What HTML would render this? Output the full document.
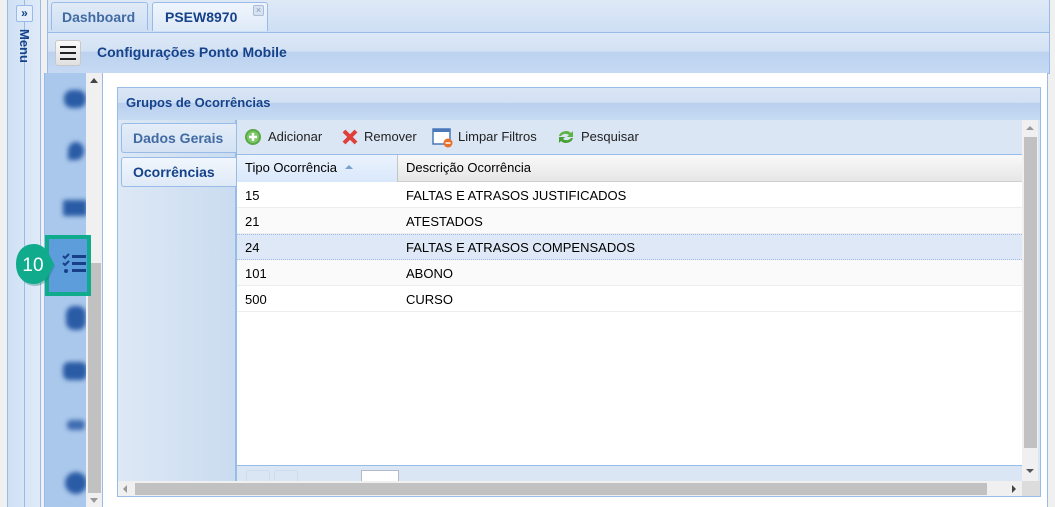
<!DOCTYPE html>
<html><head><meta charset="utf-8"><style>
*{margin:0;padding:0;box-sizing:border-box}
body{width:1055px;height:507px;overflow:hidden;background:#f0f0f0;font-family:"Liberation Sans",sans-serif;position:relative}
.a{position:absolute}
.b{font-weight:bold;color:#15428b}
.row{position:absolute;left:237px;width:785px;height:26px;border-bottom:1px solid #ededed;font-size:13px;color:#000}
.row span{position:absolute;top:6px}
.blur{filter:blur(2.5px);background:#2a5ba5;position:absolute}
</style></head><body>
<div class="a" style="left:7px;top:0;width:34px;height:507px;background:linear-gradient(90deg,#cfe0f5,#dfeaf8);border-left:1px solid #99bbe8;border-right:1px solid #99bbe8"></div>
<div class="a" style="left:24px;top:0;width:1px;height:507px;background:#99bbe8"></div>
<div class="a" style="left:16px;top:5px;width:17px;height:17px;background:#e6eef9;border:1px solid #99bbe8;border-radius:2px;font-size:12px;color:#15428b;text-align:center;line-height:14px;font-weight:bold">»</div>
<div class="a b" style="left:17px;top:29px;font-size:13px;writing-mode:vertical-rl">Menu</div>
<div class="a" style="left:47px;top:0;width:1003px;height:32px;background:linear-gradient(#dfe9f6,#cddff4);border-left:1px solid #99bbe8;border-right:1px solid #99bbe8"></div>
<div class="a b" style="left:51px;top:2px;width:97px;height:28px;background:linear-gradient(#e1ebf7,#cedff4);border:1px solid #99bbe8;border-bottom:none;border-radius:3px 3px 0 0;font-size:14px;color:#416aa3;padding:6px 0 0 10px">Dashboard</div>
<div class="a b" style="left:152px;top:2px;width:116px;height:29px;background:linear-gradient(#f0f5fc,#deeaf8);border:1px solid #99bbe8;border-bottom:none;border-radius:3px 3px 0 0;font-size:14px;color:#15428b;padding:6px 0 0 12px">PSEW8970</div>
<div class="a" style="left:253px;top:5px;width:11px;height:11px;background:#d6e2f1;border:1px solid #aabcd6;border-radius:2px;color:#8899b3;font-size:9px;line-height:9px;text-align:center">×</div>
<div class="a" style="left:47px;top:32px;width:1003px;height:42px;background:linear-gradient(#dde8f6 0,#d3e2f4 45%,#bcd2ef 48%,#c5d9f3 100%);border:1px solid #99bbe8"></div>
<div class="a" style="left:55px;top:40px;width:26px;height:26px;background:linear-gradient(#fafafa,#e0e0e0);border:1px solid #c8c8c8;border-radius:3px"></div>
<div class="a" style="left:60px;top:46px;width:16px;height:2px;background:#222;box-shadow:0 6px 0 #222,0 12px 0 #222"></div>
<div class="a b" style="left:97px;top:44px;font-size:14px">Configurações Ponto Mobile</div>
<div class="a" style="left:44px;top:73px;width:1px;height:434px;background:#99bbe8"></div>
<div class="a" style="left:45px;top:73px;width:42px;height:434px;background:#aac8ec"></div>
<div class="blur" style="left:64px;top:90px;width:22px;height:18px;border-radius:8px"></div>
<div class="blur" style="left:68px;top:142px;width:16px;height:18px;border-radius:50% 50% 50% 0"></div>
<div class="blur" style="left:63px;top:200px;width:24px;height:16px;border-radius:2px"></div>
<div class="blur" style="left:66px;top:306px;width:20px;height:24px;border-radius:8px"></div>
<div class="blur" style="left:63px;top:362px;width:24px;height:18px;border-radius:6px"></div>
<div class="blur" style="left:67px;top:420px;width:18px;height:10px;border-radius:4px;background:#3f6bb0"></div>
<div class="blur" style="left:65px;top:472px;width:22px;height:22px;border-radius:50%"></div>
<div class="a" style="left:86px;top:73px;width:16px;height:434px;background:#f0f0f0"></div>
<div class="a" style="left:90px;top:78px;width:0;height:0;border-left:4px solid transparent;border-right:4px solid transparent;border-bottom:5px solid #444"></div>
<div class="a" style="left:88px;top:263px;width:13px;height:230px;background:#c1c1c1"></div>
<div class="a" style="left:90px;top:498px;width:0;height:0;border-left:4px solid transparent;border-right:4px solid transparent;border-top:5px solid #999"></div>
<div class="a" style="left:45px;top:235px;width:46px;height:61px;background:#5d9ddc;border:4px solid #10ab8c"></div>
<svg class="a" style="left:62px;top:252px" width="25" height="24"><g stroke="#1a3f8a" stroke-width="2" fill="none"><path d="M1 4l2 2 4-4M1 11l2 2 4-4"/></g><circle cx="4" cy="19" r="2" fill="#1a3f8a"/><g fill="#1a3f8a"><rect x="10" y="3" width="14" height="3"/><rect x="10" y="10" width="14" height="3"/><rect x="10" y="17" width="14" height="3"/></g></svg>
<svg class="a" style="left:15px;top:243px" width="42" height="46"><path d="M20 3C9 3 3 11 3 23s7 20 17 20c6 0 10-3 14-8l6-12-6-12C30 6 26 3 20 3z" fill="#0b7a63" opacity=".35"/><path d="M19 1C8 1 1 9 1 21s7 20 18 20c6 0 10-3 14-8l6-12-6-12C29 4 25 1 19 1z" fill="#10ab8c"/><text x="18" y="28" font-family="Liberation Sans" font-size="19" fill="#fff" text-anchor="middle">10</text></svg>
<div class="a" style="left:102px;top:73px;width:946px;height:434px;background:#fff;border-left:1px solid #99bbe8;border-right:1px solid #99bbe8"></div>
<div class="a" style="left:117px;top:87px;width:924px;height:410px;border:1px solid #99bbe8;background:#dae6f4"></div>
<div class="a" style="left:118px;top:88px;width:922px;height:32px;background:linear-gradient(#dae6f4 0,#d1e0f3 45%,#b9cfee 48%,#c7dbf3 100%)"></div>
<div class="a b" style="left:126px;top:95px;font-size:13px">Grupos de Ocorrências</div>
<div class="a" style="left:118px;top:120px;width:118px;height:366px;background:linear-gradient(90deg,#dde8f5,#cadcf0);border-right:1px solid #99bbe8"></div>
<div class="a b" style="left:121px;top:123px;width:115px;height:30px;background:linear-gradient(#e4edf8,#d3e2f4);border:1px solid #99bbe8;border-right:none;border-radius:3px 0 0 3px;font-size:14px;color:#416aa3;padding:6px 0 0 11px">Dados Gerais</div>
<div class="a b" style="left:121px;top:157px;width:116px;height:30px;background:linear-gradient(#f1f6fc,#dfeaf7);border:1px solid #99bbe8;border-right:none;border-radius:3px 0 0 3px;font-size:14px;padding:6px 0 0 11px">Ocorrências</div>
<div class="a" style="left:236px;top:120px;width:786px;height:35px;background:#dae6f4;border-bottom:1px solid #99bbe8"></div>
<svg class="a" style="left:244px;top:128px" width="18" height="18"><circle cx="9" cy="9" r="8" fill="#5aa846"/><circle cx="9" cy="9" r="6" fill="#7cc766"/><path d="M9 5v8M5 9h8" stroke="#fff" stroke-width="2.5"/></svg>
<div class="a" style="left:268px;top:129px;font-size:13px;color:#222">Adicionar</div>
<svg class="a" style="left:341px;top:128px" width="18" height="18"><path d="M3 3l12 12M15 3L3 15" stroke="#e0403a" stroke-width="4"/></svg>
<div class="a" style="left:364px;top:129px;font-size:13px;color:#222">Remover</div>
<svg class="a" style="left:432px;top:127px" width="22" height="22"><rect x="1" y="2" width="17" height="15" fill="#fff" stroke="#4a78b8" stroke-width="1.5"/><rect x="1" y="2" width="17" height="3" fill="#4a78b8"/><circle cx="16" cy="16" r="4.5" fill="#e8702a"/><path d="M13.5 16h5" stroke="#fff" stroke-width="1.5"/></svg>
<div class="a" style="left:458px;top:129px;font-size:13px;color:#222">Limpar Filtros</div>
<svg class="a" style="left:556px;top:127px" width="20" height="20"><path d="M3 9a7 6 0 0 1 12-3l2-2v6h-6l2-2a5 4 0 0 0-8 1z" fill="#5db244"/><path d="M17 11a7 6 0 0 1-12 3l-2 2v-6h6l-2 2a5 4 0 0 0 8-1z" fill="#48a034"/></svg>
<div class="a" style="left:581px;top:129px;font-size:13px;color:#222">Pesquisar</div>
<div class="a" style="left:237px;top:155px;width:785px;height:27px;background:linear-gradient(#f9f9f9,#e6e6e6);border-bottom:1px solid #d0d0d0"></div>
<div class="a" style="left:237px;top:155px;width:161px;height:27px;background:linear-gradient(#ebf3fd,#d9e8fb);border-right:1px solid #c5c5c5"></div>
<div class="a" style="left:245px;top:160px;font-size:13px;color:#000">Tipo Ocorrência</div>
<div class="a" style="left:345px;top:165px;width:0;height:0;border-left:4px solid transparent;border-right:4px solid transparent;border-bottom:4px solid #7aa0d0"></div>
<div class="a" style="left:406px;top:160px;font-size:13px;color:#000">Descrição Ocorrência</div>
<div class="a" style="left:237px;top:182px;width:785px;height:283px;background:#fff"></div>
<div class="row" style="top:182px;background:#fff"><span style="left:8px">15</span><span style="left:169px">FALTAS E ATRASOS JUSTIFICADOS</span></div>
<div class="row" style="top:208px;background:#fafafa"><span style="left:8px">21</span><span style="left:169px">ATESTADOS</span></div>
<div class="row" style="top:234px;background:#dfe8f6;border-top:1px dotted #a3bae9;border-bottom:1px dotted #a3bae9"><span style="left:8px;top:5px">24</span><span style="left:169px;top:5px">FALTAS E ATRASOS COMPENSADOS</span></div>
<div class="row" style="top:260px;background:#fafafa"><span style="left:8px">101</span><span style="left:169px">ABONO</span></div>
<div class="row" style="top:286px;background:#fff"><span style="left:8px">500</span><span style="left:169px">CURSO</span></div>
<div class="a" style="left:236px;top:120px;width:1px;height:366px;background:#99bbe8"></div>
<div class="a" style="left:237px;top:465px;width:785px;height:20px;background:#dae6f4;border-top:1px solid #99bbe8"></div>
<div class="a" style="left:246px;top:470px;width:24px;height:12px;border:1px solid #cfdcec;border-radius:2px"></div>
<div class="a" style="left:274px;top:470px;width:24px;height:12px;border:1px solid #cfdcec;border-radius:2px"></div>
<div class="a" style="left:361px;top:470px;width:38px;height:14px;background:#fff;border:1px solid #b5b8c8"></div>
<div class="a" style="left:1022px;top:120px;width:16px;height:361px;background:#f0f0f0"></div>
<div class="a" style="left:1026px;top:126px;width:0;height:0;border-left:4px solid transparent;border-right:4px solid transparent;border-bottom:4px solid #999"></div>
<div class="a" style="left:1024px;top:137px;width:13px;height:311px;background:#c1c1c1"></div>
<div class="a" style="left:1026px;top:469px;width:0;height:0;border-left:4px solid transparent;border-right:4px solid transparent;border-top:4px solid #555"></div>
<div class="a" style="left:118px;top:481px;width:904px;height:15px;background:#f0f0f0"></div>
<div class="a" style="left:1022px;top:481px;width:18px;height:15px;background:#dcdcdc"></div>
<div class="a" style="left:123px;top:485px;width:0;height:0;border-top:4px solid transparent;border-bottom:4px solid transparent;border-right:4px solid #999"></div>
<div class="a" style="left:135px;top:483px;width:852px;height:12px;background:#c1c1c1"></div>
<div class="a" style="left:1012px;top:485px;width:0;height:0;border-top:4px solid transparent;border-bottom:4px solid transparent;border-left:4px solid #444"></div>
</body></html>
